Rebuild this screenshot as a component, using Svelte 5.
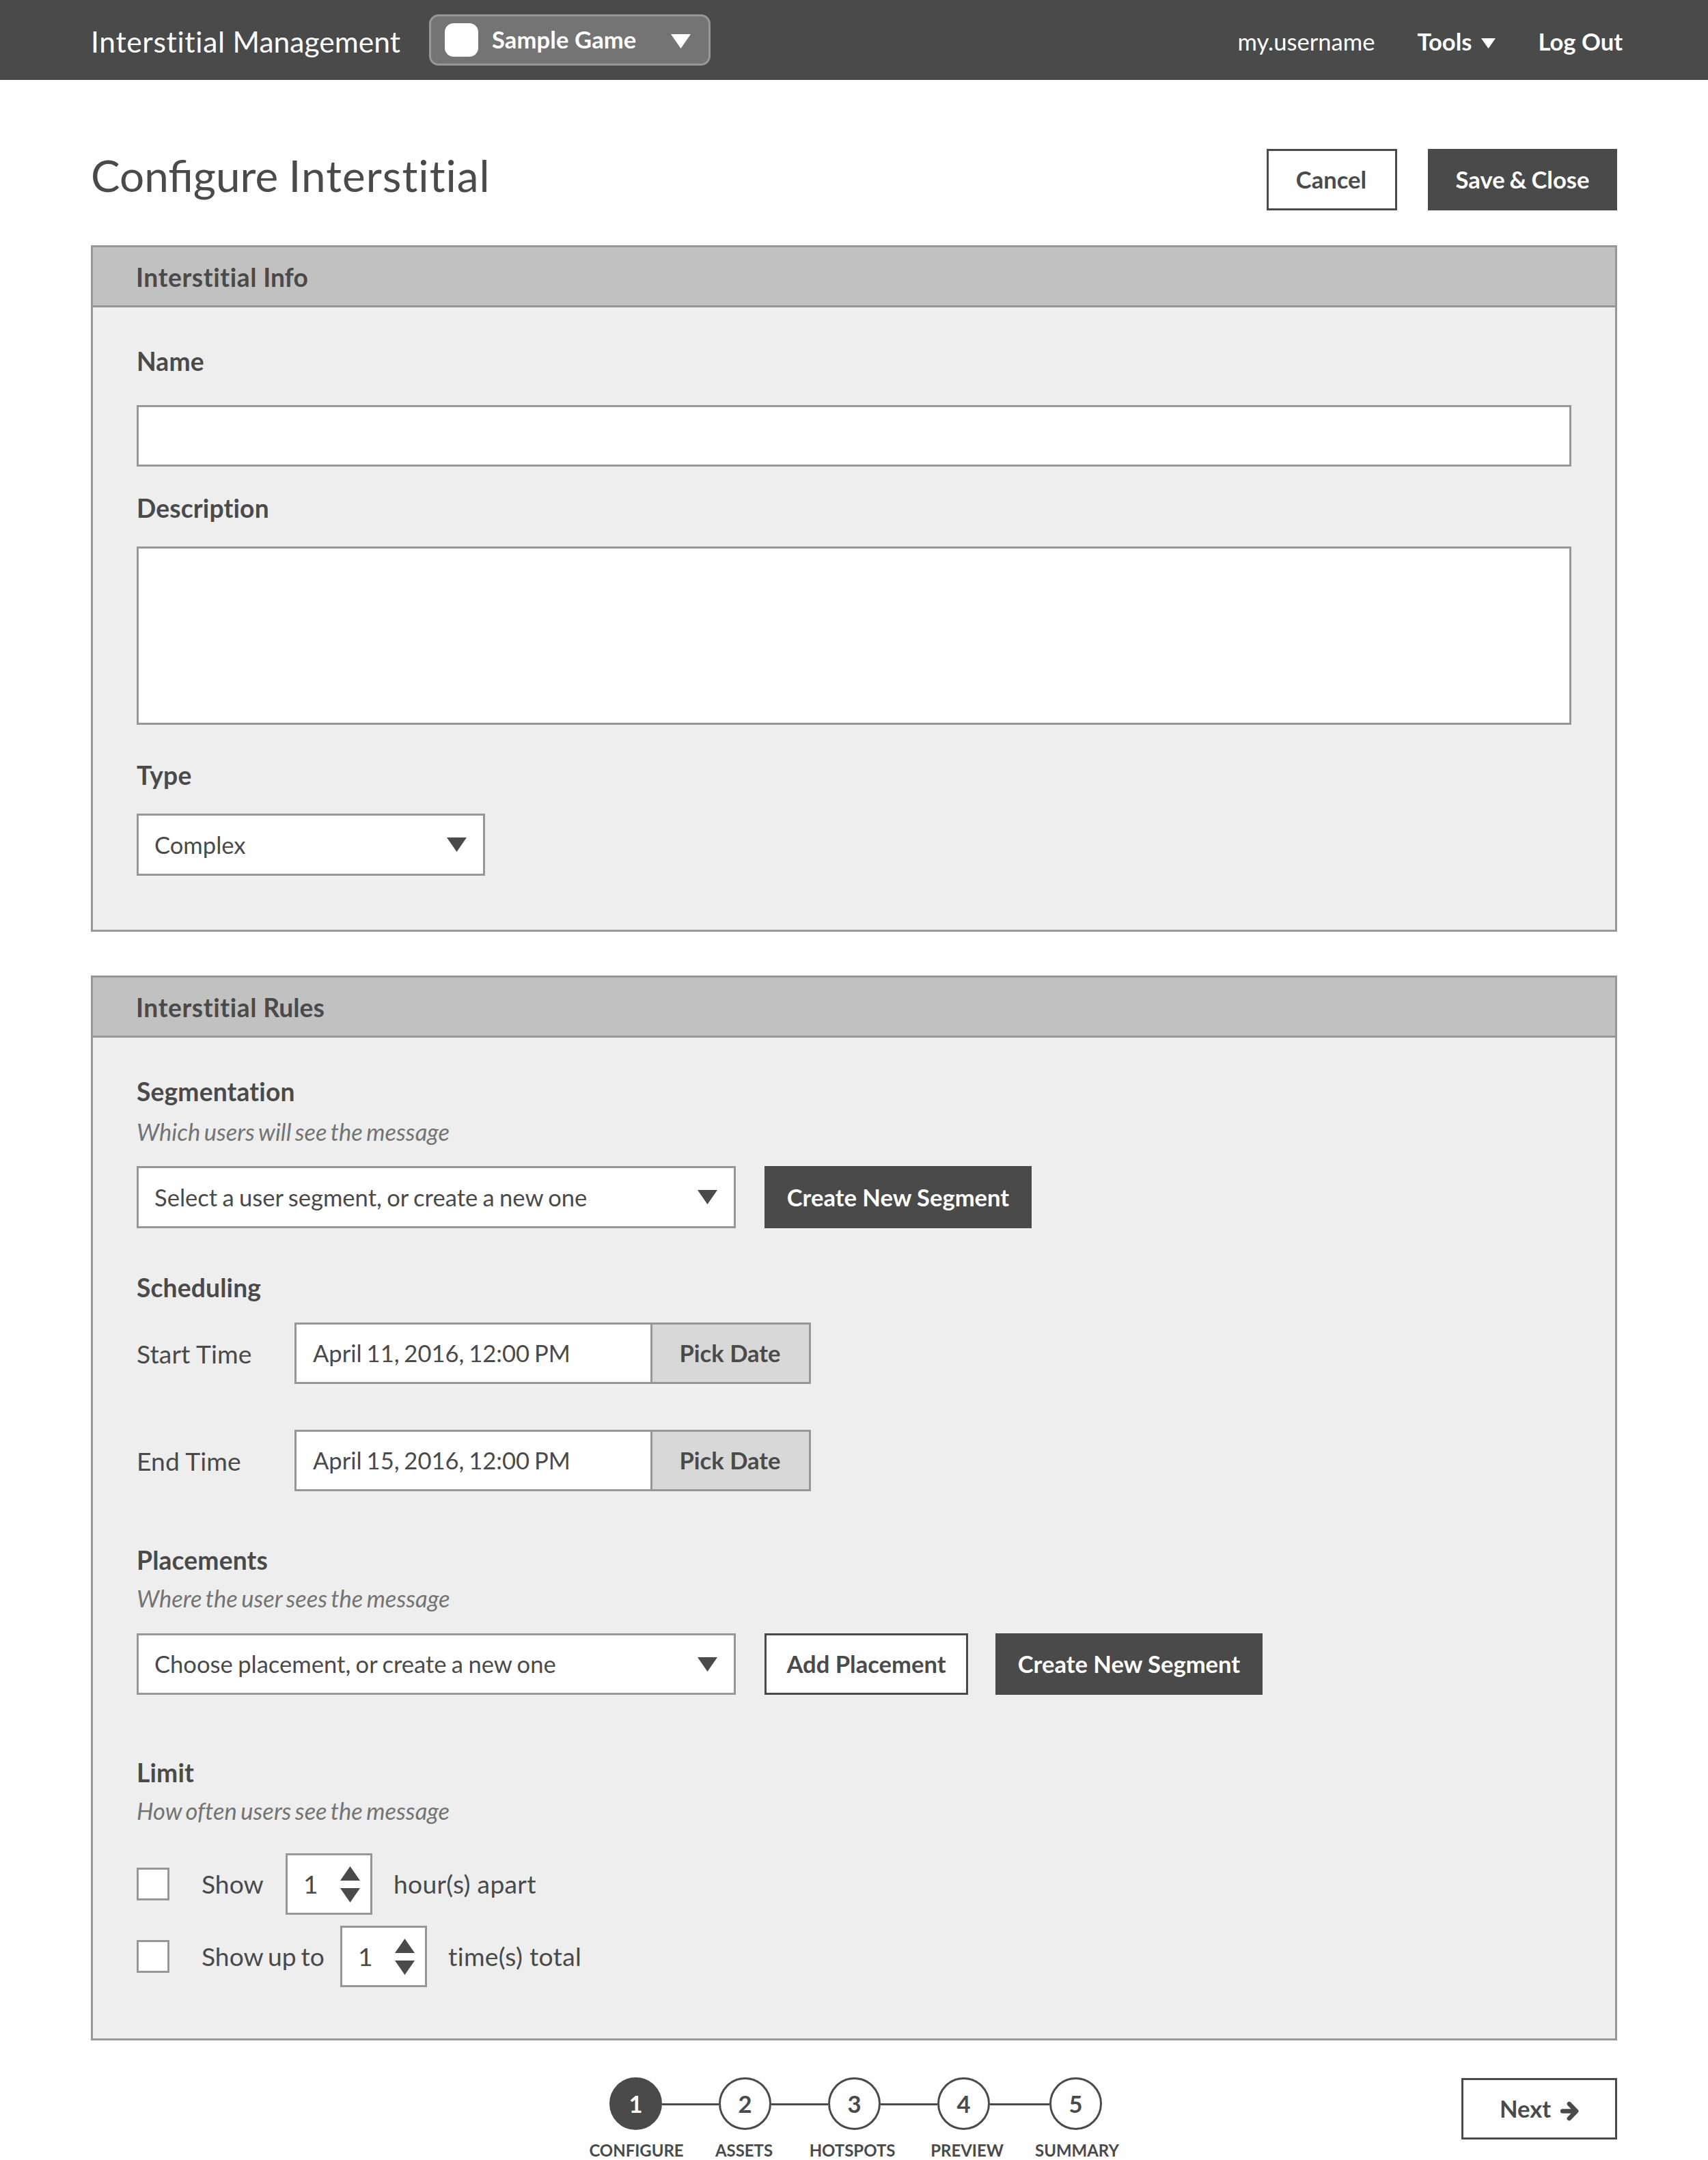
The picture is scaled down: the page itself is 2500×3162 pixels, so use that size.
<script>
  const dates = [
    { label: 'Start Time', value: 'April 11, 2016, 12:00 PM' },
    { label: 'End Time', value: 'April 15, 2016, 12:00 PM' }
  ];
  const limits = [
    { before: 'Show', value: 1, after: 'hour(s) apart', kind: 'apart' },
    { before: 'Show up to', value: 1, after: 'time(s) total', kind: 'total' }
  ];
  const steps = ['Configure', 'Assets', 'Hotspots', 'Preview', 'Summary'];
</script>

{#snippet caret(kind)}
  <svg class="caret {kind}" viewBox="0 0 29 21" preserveAspectRatio="none" aria-hidden="true">
    <path d="M0 0H29L14.5 21Z" fill="currentColor" />
  </svg>
{/snippet}

<div class="screen">
  <header class="topbar">
    <div class="brand"><span class="track">Interstitial</span> Management</div>
    <button class="game">
      <span class="thumb"></span>
      <span class="game-name">Sample Game</span>
      {@render caret('')}
    </button>
    <nav class="account">
      <span class="user">my.username</span>
      <span class="tools">Tools {@render caret('small')}</span>
      <span class="logout">Log Out</span>
    </nav>
  </header>

  <main>
    <div class="heading">
      <h1><span class="joined">Configure</span> <span class="track">Interstitial</span></h1>
      <button class="btn outline cancel">Cancel</button>
      <button class="btn solid save">Save &amp; Close</button>
    </div>

    <section class="panel info">
      <h2><span><span class="track">Interstitial</span> Info</span></h2>
      <div class="body">
        <h3>Name</h3>
        <input class="field name" type="text" aria-label="Name" />
        <h3 class="description-label">Description</h3>
        <textarea class="field description" aria-label="Description"></textarea>
        <h3 class="type-label">Type</h3>
        <div class="field select type"><span>Complex</span>{@render caret('')}</div>
      </div>
    </section>

    <section class="panel rules">
      <h2><span><span class="track">Interstitial</span> Rules</span></h2>
      <div class="body">
        <h3>Segmentation</h3>
        <p class="hint first">Which users will see the message</p>
        <div class="row segment-row">
          <div class="field select wide">
            <span>Select a user segment, or create a new one</span>{@render caret('')}
          </div>
          <button class="btn solid create">Create New Segment</button>
        </div>

        <h3 class="scheduling">Scheduling</h3>
        <div class="dates">
          {#each dates as d}
            <div class="row">
              <span class="date-label">{d.label}</span>
              <div class="field date">{d.value}</div>
              <button class="pick">Pick Date</button>
            </div>
          {/each}
        </div>

        <h3 class="placements">Placements</h3>
        <p class="hint">Where the user sees the message</p>
        <div class="row placement-row">
          <div class="field select wide">
            <span>Choose placement, or create a new one</span>{@render caret('')}
          </div>
          <button class="btn outline add">Add Placement</button>
          <button class="btn solid create">Create New Segment</button>
        </div>

        <h3 class="limit">Limit</h3>
        <p class="hint">How often users see the message</p>
        <div class="limits">
          {#each limits as l}
            <div class="row limit-row">
              <span class="check"></span>
              <span class="before {l.kind}">{l.before}</span>
              <div class="field stepper">
                <span>{l.value}</span>
                <span class="arrows">
                  {@render caret('up')}
                  {@render caret('')}
                </span>
              </div>
              <span class="after">{l.after}</span>
            </div>
          {/each}
        </div>
      </div>
    </section>

    <footer>
      <div class="steps">
        {#each steps as name, i}
          {#if i > 0}<span class="link" class:long={i === 4}></span>{/if}
          <div class="step {name.toLowerCase()}" class:active={i === 0}>
            <span class="num">{i + 1}</span>
            <span class="step-name">{name}</span>
          </div>
        {/each}
      </div>
      <button class="btn outline next">
        <span>Next</span>
        <svg class="arrow" viewBox="0 0 27 29" aria-hidden="true">
          <path d="M3 14.5H22M12.8 3.8L23.2 14.5L12.8 25.2" fill="none" stroke="currentColor" stroke-width="6.4" stroke-linecap="round" stroke-linejoin="round" />
        </svg>
      </button>
    </footer>
  </main>
</div>

<style>
  :global(body) {
    margin: 0;
    background: #fff;
  }
  .screen {
    width: 2500px;
    height: 3162px;
    overflow: hidden;
    box-sizing: border-box;
    font-family: Lato, 'Liberation Sans', sans-serif;
    font-size: 34.57px;
    font-variant-ligatures: no-common-ligatures;
    line-height: 40px;
    color: #4a4a4a;
    background: #fefefe;
  }
  .screen :where(*) {
    box-sizing: border-box;
  }
  .joined {
    font-variant-ligatures: common-ligatures;
  }
  .track {
    letter-spacing: 0.016em;
  }
  button,
  input,
  textarea {
    font: inherit;
    color: inherit;
    margin: 0;
    padding: 0;
    border-radius: 0;
    resize: none;
    outline: none;
  }
  h1,
  h2,
  h3,
  p {
    margin: 0;
  }
  .row {
    display: flex;
    align-items: center;
  }
  .caret {
    display: block;
    flex: none;
    width: 29px;
    height: 21px;
  }
  .caret.up {
    transform: rotate(180deg);
  }
  .caret.small {
    width: 21px;
    height: 15px;
  }

  /* top bar */
  .topbar {
    display: flex;
    align-items: center;
    height: 117px;
    padding: 0 125px 0 132px;
    background: #4a4a4a;
    color: #fff;
  }
  .brand {
    width: 496px;
    padding: 5px 0 0 1px;
    font-size: 42.55px;
    white-space: nowrap;
  }
  .game {
    display: flex;
    align-items: center;
    width: 412px;
    height: 75px;
    padding: 0 26px 0 20px;
    border: 3px solid #979797;
    border-radius: 14px;
    background: #747474;
    font-weight: 700;
    color: #fff;
  }
  .thumb {
    width: 49px;
    height: 49px;
    border-radius: 13px;
    background: #fff;
  }
  .game-name {
    margin-left: 20px;
    padding-bottom: 1px;
    letter-spacing: 0.1px;
  }
  .game .caret {
    margin: 3px 0 0 auto;
  }
  .account {
    display: flex;
    align-items: center;
    margin-left: auto;
    padding-top: 5px;
    white-space: nowrap;
  }
  .tools {
    display: flex;
    align-items: center;
    gap: 13px;
    margin-left: 62px;
    font-weight: 700;
  }
  .tools .caret {
    margin-top: 5px;
  }
  .logout {
    margin-left: 63px;
    font-weight: 700;
  }

  main {
    padding: 101px 133px 0;
  }

  /* buttons */
  .btn {
    display: flex;
    align-items: center;
    justify-content: center;
    flex: none;
    height: 90px;
    border: 3px solid #4a4a4a;
    font-weight: 700;
    white-space: nowrap;
  }
  .outline {
    background: #fefefe;
  }
  .solid {
    background: #4a4a4a;
    color: #fff;
  }

  .heading {
    display: flex;
    align-items: center;
    height: 90px;
    margin-bottom: 51px;
  }
  h1 {
    margin-right: auto;
    font-size: 63.83px;
    font-weight: 400;
    line-height: 80px;
    padding-bottom: 12px;
    word-spacing: -1px;
  }
  .cancel {
    width: 191px;
    padding-right: 2px;
  }
  .save {
    width: 277px;
    margin-left: 45px;
    word-spacing: -1.5px;
  }

  /* panels */
  .panel {
    border: 3px solid #979797;
    background: #eee;
  }
  .rules {
    margin-top: 64px;
  }
  h2 {
    display: flex;
    align-items: center;
    height: 88px;
    padding: 2px 63px 0;
    border-bottom: 3px solid #979797;
    background: #c1c1c1;
    font-size: 37.23px;
    font-weight: 700;
  }
  .body {
    padding: 59px 64px 0;
  }
  .info .body {
    padding-bottom: 79px;
  }
  .rules .body {
    padding-bottom: 75px;
  }
  h3 {
    margin-bottom: -1px;
    font-size: 37.23px;
    font-weight: 700;
    line-height: 40px;
    letter-spacing: 0.15px;
  }
  .hint {
    margin-top: 17px;
    font-style: italic;
    word-spacing: -2.7px;
    color: #747474;
  }
  .hint.first {
    margin-top: 20px;
  }
  .field {
    display: block;
    height: 90px;
    border: 3px solid #979797;
    background: #fff;
  }
  .name {
    width: 100%;
    margin-top: 45px;
  }
  .description-label {
    margin-top: 41px;
  }
  .description {
    width: 100%;
    height: 261px;
    margin-top: 37px;
  }
  .type-label {
    margin-top: 54px;
  }
  .select {
    display: flex;
    align-items: center;
    justify-content: space-between;
    padding: 0 24px 0 23px;
    word-spacing: -1.5px;
    white-space: nowrap;
  }
  .type {
    width: 510px;
    height: 91px;
    margin-top: 37px;
  }
  .wide {
    width: 877px;
  }
  .segment-row {
    margin-top: 30px;
  }
  .segment-row > * {
    height: 91px;
  }
  .create {
    width: 391px;
    margin-left: 42px;
  }
  .scheduling {
    margin-top: 67px;
  }
  .dates {
    display: flex;
    flex-direction: column;
    gap: 67px;
    margin-top: 32px;
  }
  .date-label {
    width: 231px;
    padding-top: 2px;
    font-size: 37.23px;
    letter-spacing: 0.08px;
  }
  .date {
    display: flex;
    align-items: center;
    width: 524px;
    padding-left: 24px;
    word-spacing: -2px;
    white-space: nowrap;
  }
  .pick {
    width: 235px;
    height: 90px;
    margin-left: -3px;
    padding-right: 2px;
    border: 3px solid #979797;
    background: #d8d8d8;
    font-weight: 700;
  }
  .placements {
    margin-top: 81px;
  }
  .placement-row {
    margin-top: 31px;
  }
  .add {
    width: 298px;
    margin-left: 42px;
  }
  .add + .create {
    margin-left: 40px;
  }
  .limit {
    margin-top: 94px;
  }
  .limits {
    display: flex;
    flex-direction: column;
    gap: 16px;
    margin-top: 42px;
    font-size: 37.23px;
  }
  .check {
    width: 48px;
    height: 48px;
    margin-right: 47px;
    border: 3px solid #979797;
    background: #fff;
  }
  .before {
    word-spacing: -2.5px;
  }
  .before.apart {
    width: 123px;
  }
  .before.total {
    width: 203px;
  }
  .stepper {
    display: flex;
    align-items: center;
    justify-content: space-between;
    width: 127px;
    padding: 0 15px 0 23px;
  }
  .arrows {
    display: flex;
    flex-direction: column;
    gap: 11px;
  }
  .after {
    margin-left: 31px;
    letter-spacing: 0.3px;
  }

  /* footer */
  footer {
    display: flex;
    align-items: flex-start;
    justify-content: space-between;
    padding: 54px 0 0 759px;
  }
  .steps {
    display: flex;
  }
  .step {
    display: flex;
    flex-direction: column;
    align-items: center;
    width: 77px;
    font-weight: 700;
  }
  .num {
    display: flex;
    align-items: center;
    justify-content: center;
    width: 77px;
    height: 77px;
    border: 3px solid #4a4a4a;
    border-radius: 50%;
    background: #fefefe;
  }
  .active .num {
    background: #4a4a4a;
    color: #fff;
  }
  .step-name {
    margin-top: 16px;
    font-size: 23.94px;
    line-height: 28px;
    text-transform: uppercase;
    white-space: nowrap;
  }
  .configure .step-name {
    margin-left: 2px;
  }
  .assets .step-name {
    margin-right: 3px;
  }
  .hotspots .step-name {
    margin-right: 6px;
  }
  .preview .step-name {
    margin-left: 10px;
  }
  .summary .step-name {
    margin-left: 4px;
  }
  .link {
    width: 83px;
    height: 3px;
    margin-top: 38px;
    background: #4a4a4a;
  }
  .link.long {
    width: 87px;
  }
  .next {
    width: 228px;
    margin-top: 1px;
    gap: 14px;
  }
  .arrow {
    width: 27px;
    height: 29px;
    margin-top: 6px;
  }
</style>
